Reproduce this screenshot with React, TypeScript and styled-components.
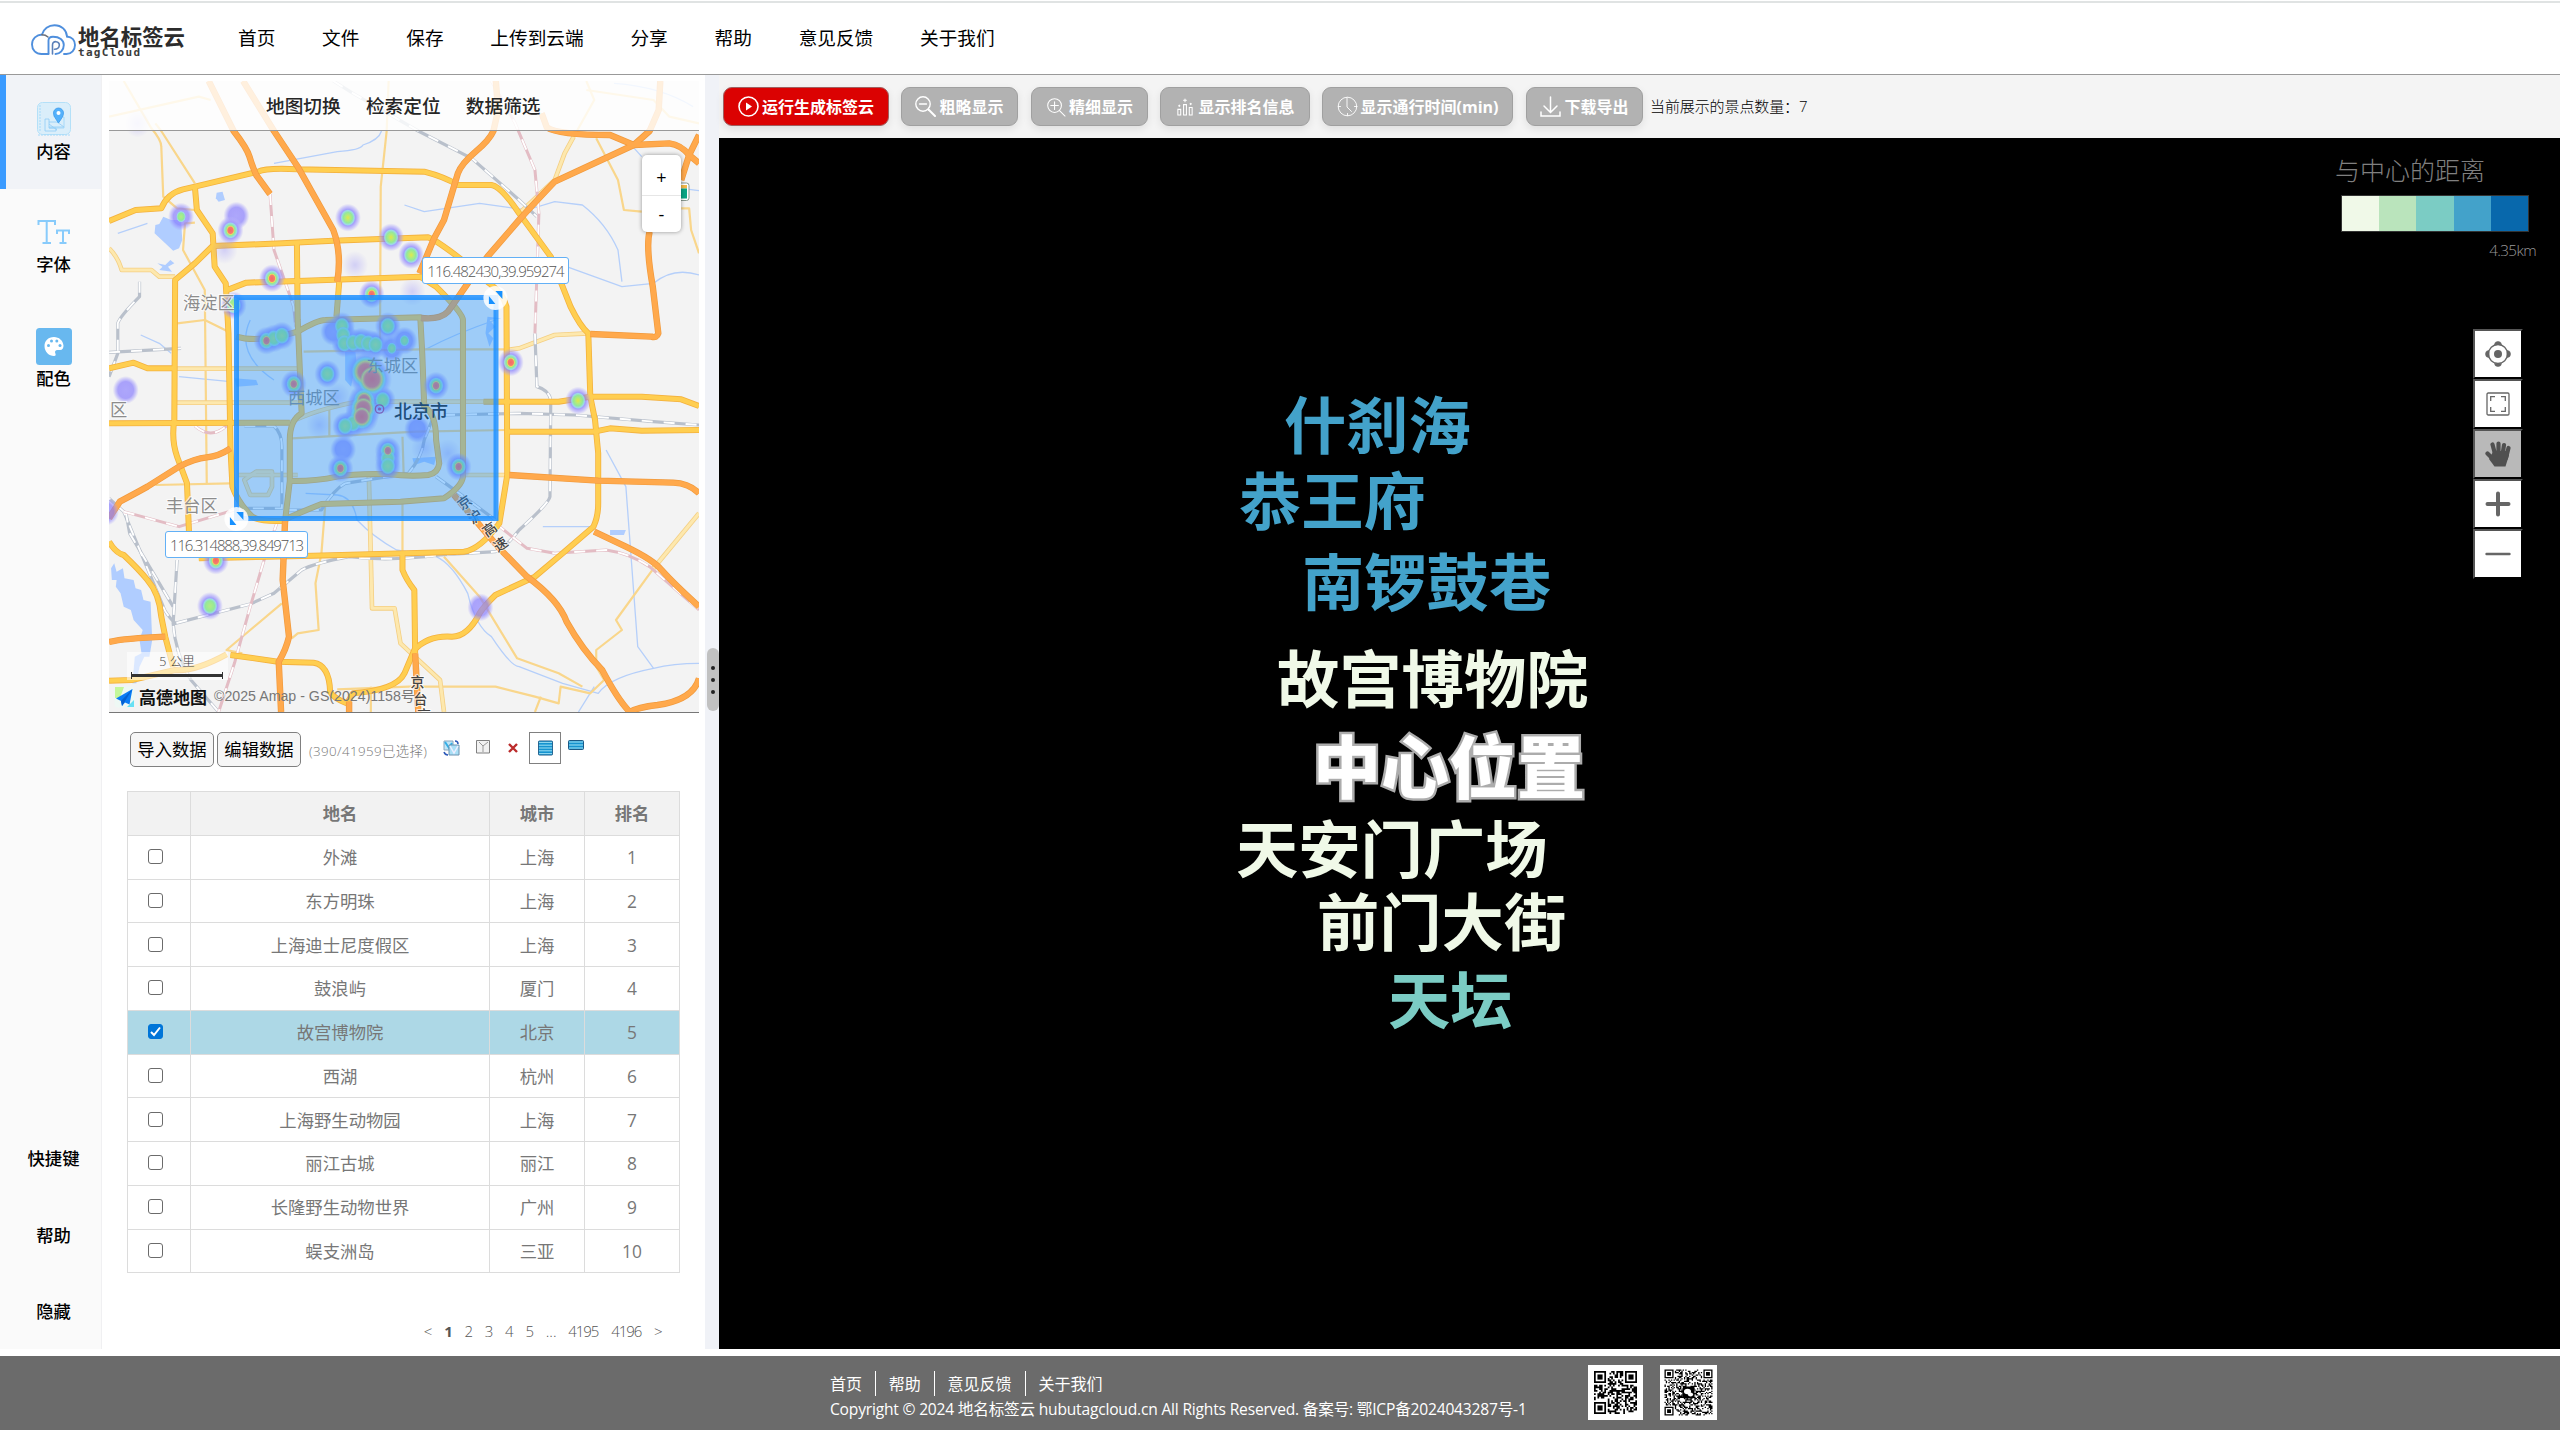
import React from "react";
import styled, { createGlobalStyle, css } from "styled-components";

const FONT = '"Open Sans", "Noto Sans CJK SC", sans-serif';
const CJK = '"Noto Sans CJK SC", sans-serif';

const GlobalStyle = createGlobalStyle`
  * { box-sizing: border-box; }
  html, body { margin: 0; padding: 0; background: #fff; }
  body { font-family: ${FONT}; font-size: 17.33px; line-height: 1.4; color: #000; overflow: hidden; }
  button { font-family: inherit; padding: 0; margin: 0; }
`;

const Page = styled.div`
  width: 2560px;
  height: 1430px;
  display: flex;
  flex-direction: column;
  background: #fff;
`;

/* ---------- header ---------- */

const Header = styled.header`
  height: 75px;
  flex: none;
  display: flex;
  align-items: center;
  border-bottom: 1px solid #999;
  border-top: 1px solid #fff;
  box-shadow: inset 0 2px 0 #e0e3e3;
  padding-left: 31px;
`;

const Logo = styled.div`
  width: 207px;
  display: flex;
  align-items: center;
  gap: 2px;
  padding-top: 4px;
`;

const LogoText = styled.div`
  display: flex;
  flex-direction: column;
  padding-top: 2px;
`;

const LogoTitle = styled.span`
  font: 700 21.4px/24px ${CJK};
  color: #2c2c2c;
  white-space: nowrap;
`;

const LogoSub = styled.span`
  font: 700 11px/10px "DejaVu Sans Mono", monospace;
  letter-spacing: 1.3px;
  color: #3c3c3c;
`;

const Nav = styled.nav`
  display: flex;
  gap: 46.8px;
  padding-bottom: 2px;
  font: 400 18.67px/26px ${CJK};
`;

/* ---------- main ---------- */

const Main = styled.main`
  height: 1274px;
  flex: none;
  display: flex;
`;

const Sidebar = styled.aside`
  width: 102px;
  flex: none;
  display: flex;
  flex-direction: column;
  justify-content: space-between;
  background: #fafafa;
  border-right: 1px solid #f0f0f2;
`;

const SideItem = styled.div<{ $active?: boolean }>`
  height: 113.7px;
  display: flex;
  flex-direction: column;
  align-items: center;
  justify-content: flex-end;
  padding: 0 0 26px 6px;
  font: 500 17.33px/24px ${CJK};
  ${(p) =>
    p.$active &&
    css`
      background: #f1f3f7;
      box-shadow: inset 6px 0 0 #3b9bff;
    `}
`;

const SideIcon = styled.div`
  height: 40px;
  display: flex;
  align-items: center;
  justify-content: center;
`;

const SideFooter = styled.div`
  display: flex;
  flex-direction: column;
  align-items: center;
  gap: 52.5px;
  padding: 0 0 26px 6px;
  font: 500 17.33px/24px ${CJK};
`;

const Panel = styled.section`
  width: 603px;
  flex: none;
  display: flex;
  flex-direction: column;
  padding-top: 6px;
`;

const MapPane = styled.div`
  position: relative;
  width: 590px;
  height: 632px;
  flex: none;
  margin-left: 7px;
  overflow: hidden;
  border-bottom: 1px solid #777;
  background: #f3f3f3;
`;

const MapBar = styled.div`
  position: absolute;
  inset: 0 0 auto 0;
  height: 50px;
  display: flex;
  gap: 25.3px;
  padding: 0 0 2px 157px;
  align-items: center;
  background: rgba(255, 255, 255, 0.82);
  border-bottom: 1px solid #999;
  font: 500 18.67px/26px ${CJK};
  color: #262626;
`;

const CoordTag = styled.div<{ $x: number; $y: number; $w: number; $tight: number }>`
  position: absolute;
  left: ${(p) => p.$x}px;
  top: ${(p) => p.$y}px;
  width: ${(p) => p.$w}px;
  height: 27px;
  border: 1px solid #62b0f6;
  border-radius: 3px;
  background: #fff;
  color: #555;
  font: 300 15px/26px ${FONT};
  letter-spacing: ${(p) => p.$tight}px;
  text-align: center;
  white-space: nowrap;
`;

const ZoomControl = styled.div`
  position: absolute;
  left: 533px;
  top: 74px;
  width: 39px;
  height: 77px;
  display: flex;
  flex-direction: column;
  background: #fff;
  border-radius: 5px;
  box-shadow: 0 0 4px rgba(0, 0, 0, 0.4);
`;

const ZoomStep = styled.div`
  flex: 1;
  display: flex;
  align-items: center;
  justify-content: center;
  padding-top: 4px;
  font: 400 18px/20px ${FONT};
  & + & { border-top: 1px solid #e6e6e6; padding-top: 0; }
`;

const ScaleBox = styled.div`
  position: absolute;
  left: 18px;
  top: 571px;
  width: 101px;
  height: 28px;
  padding: 0 5px 0 4px;
  background: rgba(255, 255, 255, 0.55);
  font: 300 12.5px/20px ${FONT};
  color: #444;
  text-align: center;
`;

const ScaleLine = styled.div`
  height: 7px;
  border: solid #333;
  border-width: 0 1px;
  display: flex;
  align-items: center;
  &::after { content: ""; width: 100%; height: 3px; background: #333; }
`;

const MapCredit = styled.div`
  position: absolute;
  left: 5px;
  top: 604px;
  height: 24px;
  display: flex;
  align-items: center;
  white-space: nowrap;
`;

const AmapName = styled.span`
  font: 700 17px/20px ${CJK};
  color: #111;
  margin: 0 7px 0 4px;
`;

const AmapCopy = styled.span`
  font: 400 14.2px/20px "Liberation Sans", ${CJK};
  color: #777;
  padding-bottom: 2px;
`;

/* ---------- data tools ---------- */

const DataTools = styled.div`
  display: flex;
  align-items: flex-start;
  height: 59px;
  margin-top: 19px;
  padding-left: 28px;
`;

const DataButton = styled.button`
  width: 84px;
  height: 35px;
  margin-right: 3px;
  padding-bottom: 2px;
  border: 1px solid #808080;
  border-radius: 5px;
  background: #f6f6f6;
  font: 400 17.33px/24px ${CJK};
  color: #000;
`;

const Selected = styled.span`
  margin: 10px 9px 0 5px;
  width: 125px;
  font: 300 13.33px/18px ${FONT};
  color: #777;
  letter-spacing: 0.4px;
  white-space: nowrap;
`;

const ToolSlot = styled.span<{ $w: number; $boxed?: boolean; $gap?: number; $drop?: number }>`
  width: ${(p) => p.$w}px;
  height: ${(p) => (p.$boxed ? 32 : 24)}px;
  margin-right: ${(p) => p.$gap ?? 0}px;
  padding-top: ${(p) => (p.$boxed ? 7 : p.$drop ?? 8)}px;
  display: flex;
  justify-content: center;
  align-items: flex-start;
  border: ${(p) => (p.$boxed ? "1px solid #808080" : "0")};
`;

/* ---------- table ---------- */

const Table = styled.div`
  width: 553px;
  margin-left: 25px;
  border: solid #dcdcdc;
  border-width: 1px 0 0 1px;
  color: #777;
  font: 400 17.33px/24px ${FONT};
`;

const Row = styled.div<{ $head?: boolean; $on?: boolean }>`
  display: grid;
  grid-template-columns: 63px 299px 95px 95px;
  height: 43.75px;
  background: ${(p) => (p.$head ? "#f2f2f2" : p.$on ? "#add8e6" : "#fff")};
  font-weight: ${(p) => (p.$head ? 700 : 400)};
`;

const Cell = styled.div`
  display: flex;
  align-items: center;
  justify-content: center;
  border: solid #dcdcdc;
  border-width: 0 1px 1px 0;
`;

const CheckCell = styled(Cell)`
  padding: 0 8px 1px 0;
`;

const Box = styled.span<{ $on?: boolean }>`
  width: 15px;
  height: 15px;
  border-radius: 3px;
  border: 1px solid ${(p) => (p.$on ? "#0075d8" : "#6b6b6b")};
  background: ${(p) => (p.$on ? "#0075d8" : "#fff")};
  display: flex;
`;

const Pager = styled.div`
  display: flex;
  justify-content: flex-end;
  gap: 12.8px;
  margin-top: 48px;
  padding-right: 43.5px;
  font: 300 15px/20px ${FONT};
  letter-spacing: -1.05px;
  color: #555;
  b { font-weight: 700; }
`;

const Dots = styled.span`
  letter-spacing: 0;
  margin-right: -1px;
`;

/* ---------- splitter ---------- */

const Splitter = styled.div`
  width: 14px;
  flex: none;
  background: #f0f2f7;
  display: flex;
  flex-direction: column;
  align-items: flex-end;
  padding-top: 573px;
`;

const Grip = styled.div`
  width: 12px;
  height: 63px;
  border-radius: 6px;
  background: #c1c1c1;
  display: flex;
  flex-direction: column;
  align-items: center;
  justify-content: center;
  gap: 8px;
  i { width: 4px; height: 4px; border-radius: 2px; background: #222; }
`;

/* ---------- cloud view ---------- */

const View = styled.section`
  flex: 1;
  display: flex;
  flex-direction: column;
`;

const Toolbar = styled.div`
  height: 63px;
  flex: none;
  display: flex;
  align-items: flex-start;
  padding: 12px 0 0 4px;
  background: #f4f4f4;
`;

const ActionButton = styled.button<{ $w: number; $gap: number; $primary?: boolean }>`
  width: ${(p) => p.$w}px;
  height: 39px;
  margin-right: ${(p) => p.$gap}px;
  display: flex;
  align-items: center;
  justify-content: center;
  gap: 3px;
  border: 1px solid ${(p) => (p.$primary ? "#a06060" : "#a0a0a0")};
  border-radius: 9px;
  background: ${(p) => (p.$primary ? "#db0202" : "#b2b2b2")};
  box-shadow: 0 3px 8px rgba(0, 0, 0, 0.09);
  color: #fff;
  font: 700 16px/24px "Open Sans", ${CJK};
  white-space: nowrap;
`;

const Count = styled.span`
  font: 300 15px/20px ${FONT};
  letter-spacing: -0.1px;
  color: #000;
  padding-top: 9px;
`;

const Canvas = styled.div`
  position: relative;
  flex: 1;
  background: #000;
  overflow: hidden;
`;

const Word = styled.span<{ $x: number; $y: number; $c: string; $center?: boolean }>`
  position: absolute;
  left: ${(p) => p.$x - 719}px;
  top: ${(p) => p.$y - 138}px;
  color: ${(p) => p.$c};
  font: 700 62.3px/62px ${CJK};
  white-space: nowrap;
  ${(p) =>
    p.$center &&
    css`
      font: 900 68px/68px ${CJK};
      -webkit-text-stroke: 5px #acacac;
      paint-order: stroke fill;
    `}
`;

const Legend = styled.div`
  position: absolute;
  right: 24px;
  top: 13px;
  width: 202px;
  display: flex;
  flex-direction: column;
`;

const LegendTitle = styled.span`
  font: 300 25px/36px ${CJK};
  color: #808080;
  padding-left: 1px;
`;

const Ramp = styled.div`
  width: 188px;
  height: 37px;
  margin: 8px 0 0 7px;
  display: flex;
  border: 1px solid #333;
`;

const Swatch = styled.span<{ $c: string }>`
  flex: 1;
  background: ${(p) => p.$c};
`;

const RampLabel = styled.span`
  align-self: flex-end;
  margin-top: 8px;
  font: 300 15.2px/20px ${FONT};
  letter-spacing: -0.6px;
  color: #999;
`;

const ViewTools = styled.div`
  position: absolute;
  right: 37px;
  top: 191px;
  display: flex;
  flex-direction: column;
`;

const ViewTool = styled.div<{ $on?: boolean }>`
  width: 50px;
  height: 50px;
  display: flex;
  align-items: center;
  justify-content: center;
  border: 2px solid;
  border-color: #555 #000 #000 #555;
  background: ${(p) => (p.$on ? "#b9b9b9" : "#fff")};
`;

/* ---------- footer ---------- */

const Footer = styled.footer`
  height: 74px;
  margin-top: 7px;
  padding-left: 830px;
  display: flex;
  background: #6b6b6b;
  color: #fff;
`;

const FooterText = styled.div`
  width: 758px;
  padding-top: 15px;
`;

const FooterLinks = styled.div`
  display: flex;
  font: 400 16px/25px ${CJK};
  span + span { margin-left: 12.9px; padding-left: 12.9px; border-left: 1px solid #fff; }
`;

const Copyright = styled.div`
  margin-top: 1px;
  font: 400 15.6px/24px ${FONT};
  letter-spacing: -0.2px;
  white-space: nowrap;
`;

const Codes = styled.div`
  display: flex;
  gap: 17px;
  padding-top: 9px;
`;

/* ---------- map drawing ---------- */

const HIGHWAYS = [
  "M275-117L338 33Q372 85 378 110T395 165L430 222",
  "M362-117L440 33L500 140L590 330Q612 400 600 485",
  "M1001-117L1007-30L995 33Q985 60 950 95T905 160L890 220L870 300L845 355L808 460",
  "M1350 75Q1250 130 1150 185Q1090 260 1060 300L980 410L930 490Q895 550 880 575Q860 600 812 594",
  "M1117-20L1130 22Q1160 45 1290 45L1350 75L1440 70Q1470 75 1490 105L1515 130",
  "M1417-117L1413-30L1390 33L1350 75",
  "M1515 45L1490 105L1470 180",
  "M1390 335Q1380 380 1398 500L1412 640Q1408 655 1395 650L1240 642",
  "M23 1195L50 1145Q90 1120 120 1100L200 1040Q240 1015 270 1012T330 985",
  "M23 1566Q60 1555 165 1550",
  "M468 1203L462 1380L478 1550Q470 1590 452 1625L458 1776",
  "M895 1125L1010 1285L1080 1370Q1160 1440 1180 1505Q1220 1590 1270 1650Q1310 1740 1340 1776",
  "M1035 1065L1260 1082L1450 1088Q1490 1090 1515 1120",
  "M1250 1235L1330 1280Q1400 1320 1420 1350Q1450 1390 1515 1460",
  "M1340 1776Q1360 1762 1410 1755Q1500 1740 1515 1675",
  "M797 1600L805 1776",
  "M630 1776V1745",
];

const MAIN_ROADS = [
  "M23 303L90 270L155 265Q170 220 210 208L240 200L400 155Q420 143 500 148L820 155Q870 170 905 195H990Q1015 200 1060 280L1140 410L1190 560Q1215 620 1235 640L1240 830L1252 900L1260 1000V1150Q1260 1190 1248 1220L1170 1300L1100 1370L1000 1425Q970 1460 960 1480Q930 1550 890 1550Q830 1545 795 1590L770 1660Q750 1710 640 1720Q630 1740 625 1750Q590 1735 582 1715Q580 1635 540 1628L450 1625L330 1605",
  "M240 200L245 270L285 340L290 440L318 490L325 640L330 985L335 1100Q350 1150 385 1190Q400 1205 460 1203Q500 1180 560 1152L760 1145L870 1135Q915 1100 918 1070L918 600Q918 580 850 500L810 470L500 483L370 488L318 512",
  "M285 378L460 370L590 362L830 352Q850 360 910 415L985 490Q1020 520 1028 560L1030 1065L1010 1210Q960 1290 920 1295L540 1307L250 1315",
  "M285 378L240 430L190 480L188 900Q180 960 195 1010L220 1090L225 1235",
  "M498 370L500 600L510 880Q480 900 480 960V1083L468 1203",
  "M605 485L598 590",
  "M345 650Q400 670 500 635Q550 600 570 600L810 592L815 700L820 860Q850 880 850 960L858 1030Q855 1060 830 1065Q780 1070 730 1062Q640 1060 600 1070Q540 1085 480 1083",
  "M23 745L85 728L120 745H190",
  "M23 910L480 908",
  "M970 845H1160L1240 830L1370 830L1470 838L1515 858",
  "M1030 935H1250L1290 925L1370 932L1515 930",
  "M23 1265Q40 1300 60 1305Q100 1350 120 1380Q150 1420 155 1490L165 1550L185 1640",
  "M23 1682L80 1680L190 1650Q240 1655 320 1603",
  "M765 1300L765 1350Q775 1380 795 1410L797 1600",
];

const PALE_ROADS = [
  "M23 385Q45 410 55 450H130L150 470H190",
  "M1235 640L1150 645L1060 685L1030 690",
  "M190 746H500", "M190 848H500", "M650 845H970",
  "M680 1070L688 1465H745L760 1570L860 1680L870 1776",
  "M1515 1180L1400 1345", "M1198 50L1175 100L1150 180L1060 280",
  "M500 1065H350", "M920 1065H1035",
  "M480 908Q540 870 650 845",
  "M365 1080L395 1055H435V1100L425 1125H380Z",
];

const THIN_ROADS = [
  "M730-117L725 33L710 200L708 690", "M60-117L130 25Q155 60 155 80L160 230Q190 260 195 265L240 270",
  "M140 10L155 33L240 190", "M240 308L215 310L210 390L265 510L270 1090", "M195 610L265 600L325 635",
  "M140 1095L330 1090", "M570 1150L560 1300L545 1390L553 1530L500 1540L485 1555", "M460 1450L320 1590L360 1600",
  "M870 1310L960 1430L1055 1615L1160 1660L1220 1700", "M600 1708L780 1700L1000 1700L1100 1730L1160 1750L1165 1700L1240 1720L1275 1680L1255 1640V1590L1320 1530L1305 1500L1400 1345",
  "M1255 55L1310 180L1325 270L1370 275", "M1470 265H1490L1495 330L1515 400", "M765 1150V1300",
  "M685 1700V1776", "M1115 1730L1100 1776", "M515 695L810 688H1030", "M485 955L800 935L1030 930",
  "M580 860V950", "M765 950L768 1065", "M23-10L250-70L280-60", "M1230-117L1250-60L1198 50",
  "M1230-90L1400-60L1440-10L1515 10",
];

const GREY_RAILS = [
  "M590-117L640-80L805 33L940 115L1060 240L1105 290",
  "M1100 640L1105 800Q1135 810 1140 840L1138 1130Q1135 1150 1060 1230Q1020 1290 1000 1295L860 1305Q730 1325 630 1310Q540 1330 510 1350L440 1420L380 1452L190 1510Q165 1480 160 1460L60 1175L23 1135",
  "M100 485V530Q50 590 45 610V700L23 770", "M23 697L205 685", "M870 885L1060 880L1200 885L1400 905L1515 915",
  "M850 1070L920 1130L1000 1200", "M470 1170H560Q590 1110 620 1090L780 1060Q815 1010 820 960L840 900",
  "M195 1320L185 1510Q190 1600 230 1680L300 1776", "M65 1175L75 1240L185 1460", "M365 918H440Q460 940 460 980V1165H370",
];

const PINK_RAILS = [
  "M990-117L1050 10L1100 150L1110 280L1100 640", "M430 222L440 390L490 560L495 620",
  "M60 1175L200 1220L345 1168", "M450 1200L415 1320L380 1460L340 1630L300 1776",
  "M1000 1210L1080 1285L1150 1300L1280 1290Q1340 1300 1390 1340L1515 1470", "M240 918Q280 960 320 918",
];

const STREAMS = [
  "M440 130L600 95Q660 90 665 75Q705 60 712 33", "M770 255L820 275L960 250L1080 270L1150 245L1220 255Q1280 310 1310 390L1320 485",
  "M1180 440Q1250 470 1320 500L1400 490Q1450 440 1515 465", "M1280 990L1330 1100L1360 1580L1400 1645Q1450 1630 1515 1630",
  "M520 1120L600 1125Q640 1130 650 1200Q690 1250 750 1290L850 1310Q890 1330 930 1420Q950 1520 990 1550Q1040 1640 1060 1640L1170 1690L1260 1720Q1290 1670 1400 1645",
  "M103 645L150 670L180 700", "M820 690Q900 640 1000 600", "M380 600Q340 700 440 780", "M200 770L330 785",
  "M1120 1220L1250 1220", "M1300-110Q1420-100 1500-40", "M1340 70L1370 110", "M1470 205L1515 212", "M120 310L45 340",
  "M1210 1776L1250 1700",
];

type Heat = { x: number; y: number; core?: "green" | "lime" | "hot" | "pale"; r?: number; faint?: boolean };

const HEAT: Heat[] = [
  { x: 205, y: 290, core: "pale" }, { x: 345, y: 287 }, { x: 330, y: 331, core: "hot" }, { x: 315, y: 390, faint: true },
  { x: 627, y: 293, core: "lime" }, { x: 736, y: 352, core: "lime" }, { x: 787, y: 405, core: "lime" },
  { x: 645, y: 435, faint: true }, { x: 435, y: 475, core: "hot" }, { x: 687, y: 523, core: "hot" },
  { x: 790, y: 515, faint: true }, { x: 338, y: 556, core: "green" }, { x: 1039, y: 727, core: "hot" },
  { x: 1209, y: 842, core: "lime" }, { x: 65, y: 810 }, { x: 421, y: 662, core: "hot" }, { x: 440, y: 655, core: "green" }, { x: 460, y: 647, core: "green" },
  { x: 612, y: 618, core: "green" }, { x: 615, y: 645, core: "green" }, { x: 728, y: 618, core: "green" }, { x: 618, y: 670, core: "green" },
  { x: 640, y: 668, core: "green" }, { x: 660, y: 665, core: "green" }, { x: 678, y: 670, core: "green" }, { x: 697, y: 674, core: "green" },
  { x: 738, y: 685, core: "pale" }, { x: 770, y: 662, core: "pale" }, { x: 590, y: 635 }, { x: 575, y: 762, core: "green" },
  { x: 490, y: 792, core: "hot" }, { x: 850, y: 797, core: "hot" }, { x: 672, y: 755, core: "hot", r: 16 },
  { x: 688, y: 778, core: "hot", r: 16 }, { x: 668, y: 842, core: "hot", r: 12 }, { x: 666, y: 865, core: "hot", r: 14 },
  { x: 662, y: 890, core: "hot", r: 13 }, { x: 640, y: 910, core: "green" }, { x: 620, y: 918, core: "green" },
  { x: 715, y: 840, core: "green" }, { x: 802, y: 927 }, { x: 555, y: 915, faint: true }, { x: 600, y: 830, faint: true },
  { x: 615, y: 988 }, { x: 608, y: 1045, core: "hot" }, { x: 728, y: 992, core: "hot" }, { x: 728, y: 1015, core: "green" },
  { x: 728, y: 1038, core: "green" }, { x: 907, y: 1040, core: "hot" }, { x: 293, y: 1322, core: "hot" },
  { x: 278, y: 1458, core: "green" }, { x: 962, y: 1462 }, { x: 95, y: 10, faint: true }, { x: 880, y: 1000, faint: true },
  { x: 15, y: 1175 }, { x: 820, y: 985, faint: true },
];

const mx = (x: number) => 100 + x * 0.3954;
const my = (y: number) => 120 + y / 3;

const Lines = ({ d, color, w, dash }: { d: string[]; color: string; w: number; dash?: string }) => (
  <g fill="none" stroke={color} strokeWidth={w} strokeDasharray={dash} strokeLinejoin="round">
    {d.map((p, i) => <path key={i} d={p} vectorEffect="non-scaling-stroke" />)}
  </g>
);

const CityMap = () => (
  <svg width="590" height="631" viewBox="109 81 590 631" style={{ display: "block" }}>
    <defs>
      <radialGradient id="halo">
        <stop offset="0" stopColor="#938aff" />
        <stop offset=".6" stopColor="#877cff" stopOpacity=".95" />
        <stop offset=".8" stopColor="#9c94ff" stopOpacity=".6" />
        <stop offset="1" stopColor="#aaa4ff" stopOpacity="0" />
      </radialGradient>
      <radialGradient id="haze">
        <stop offset="0" stopColor="#8077ff" stopOpacity=".4" />
        <stop offset="1" stopColor="#8077ff" stopOpacity="0" />
      </radialGradient>
      <radialGradient id="ring">
        <stop offset="0" stopColor="#b4f27c" />
        <stop offset=".6" stopColor="#93f090" />
        <stop offset=".84" stopColor="#9be8e4" stopOpacity=".85" />
        <stop offset="1" stopColor="#8fb6ff" stopOpacity="0" />
      </radialGradient>
      <radialGradient id="hot">
        <stop offset="0" stopColor="#ff6259" />
        <stop offset=".6" stopColor="#fb7a62" />
        <stop offset=".82" stopColor="#efe457" />
        <stop offset="1" stopColor="#a4ee70" stopOpacity="0" />
      </radialGradient>
      <radialGradient id="lime">
        <stop offset="0" stopColor="#e6ee3c" />
        <stop offset="1" stopColor="#bdf26a" stopOpacity="0" />
      </radialGradient>
    </defs>
    <rect x="109" y="81" width="590" height="631" fill="#f3f3f3" />
    <g transform="translate(100 120) scale(.3954 .33333)">
      <g fill="#b0cdff">
        <path d="M160 290L180 300H205L208 360L200 385L185 392L165 370L138 340L140 315L150 312Z" />
        <path d="M295 218L310 215L316 240L300 245L293 235Z" />
        <path d="M145 430L165 435L178 420L188 430L172 440L182 455L150 450L158 440Z" />
        <path d="M28 1345L36 1330L42 1355L58 1345L62 1375L85 1380L90 1405L104 1410L110 1440L128 1445L132 1560L125 1610H112L100 1640L92 1690L82 1690L88 1610L105 1600L100 1560L108 1530L85 1500L78 1470L60 1460L52 1420L40 1400L42 1380L30 1380Z" />
        <path d="M340 775L395 780L400 795L345 800Z" />
        <path d="M620 690L645 680L648 720L635 800L620 780Z" />
        <path d="M980 590L1015 595L985 600L1000 620L982 640L995 655L985 680L975 640Z" />
        <path d="M790 1015L850 1010L845 1035L820 1025L795 1035Z" />
        <path d="M1290 1230H1330L1325 1245H1290Z" />
      </g>
      <Lines d={STREAMS} color="#b5cffa" w={1.3} />
      <Lines d={THIN_ROADS} color="#f9d68b" w={2.2} />
      <Lines d={PALE_ROADS} color="#f4cf83" w={4.6} />
      <Lines d={PALE_ROADS} color="#fde8ae" w={3} />
      <Lines d={GREY_RAILS} color="#b9c0cb" w={3.2} />
      <Lines d={GREY_RAILS} color="#fff" w={1.9} dash="11 11" />
      <Lines d={PINK_RAILS} color="#e3bcc4" w={3} />
      <Lines d={PINK_RAILS} color="#fff" w={1.9} dash="11 11" />
      <Lines d={MAIN_ROADS} color="#f4b23e" w={6} />
      <Lines d={MAIN_ROADS} color="#ffce50" w={4.4} />
      <Lines d={HIGHWAYS} color="#f19a3d" w={6.4} />
      <Lines d={HIGHWAYS} color="#ffa94c" w={5} />
    </g>
    <g opacity=".72">
      {HEAT.map((h, i) => (
        <ellipse key={i} cx={mx(h.x)} cy={my(h.y)} rx={h.r ? h.r + 4 : 13} ry={h.r ? h.r + 5 : 14} fill={h.faint ? "url(#haze)" : "url(#halo)"} />
      ))}
    </g>
    <g opacity=".92">
      {HEAT.filter((h) => h.core).map((h, i) => {
        const r = h.r ? h.r - 1 : h.core === "pale" ? 5 : 7.6;
        return <ellipse key={i} cx={mx(h.x)} cy={my(h.y)} rx={r} ry={r + 1} fill="url(#ring)" />;
      })}
      {HEAT.filter((h) => h.core === "hot" || h.core === "lime").map((h, i) => {
        const r = h.r ? h.r - 4 : 4.4;
        return <ellipse key={i} cx={mx(h.x)} cy={my(h.y)} rx={r} ry={r + 0.8} fill={`url(#${h.core})`} />;
      })}
    </g>
    <g fontFamily='"Noto Sans CJK SC", sans-serif' fontSize="17.3" fill="#8c8c8c" stroke="#fff" strokeWidth="2" paintOrder="stroke" strokeOpacity=".7">
      <text x="183" y="308.5">海淀区</text>
      <text x="166" y="512">丰台区</text>
      <text x="110" y="416">区</text>
      <text x="288" y="403.5" strokeOpacity="0">西城区</text>
      <text x="366.5" y="371.5" strokeOpacity="0">东城区</text>
      <text x="394" y="418" fontSize="18" fontWeight="500" fill="#222" strokeOpacity="0">北京市</text>
      <g fontSize="14" fontWeight="500" fill="#444" textAnchor="middle">
        <text transform="translate(464.6 502.7) rotate(-35)" y="5">京</text>
        <text transform="translate(475 516.7) rotate(-35)" y="5">沪</text>
        <text transform="translate(489.5 529.5) rotate(-35)" y="5">高</text>
        <text transform="translate(500.5 544.5) rotate(-35)" y="5">速</text>
        <text x="417.5" y="687">京</text>
        <text x="420.5" y="703.5">台</text>
        <text x="424" y="720">高</text>
      </g>
    </g>
    <circle cx="379.5" cy="409" r="4.2" fill="none" stroke="#b4438a" strokeWidth="1.3" />
    <circle cx="379.5" cy="409" r="1.6" fill="#b4438a" />
    <rect x="672" y="183" width="17" height="17.500" rx="2.500" fill="#fff" stroke="#8a9a90" />
    <rect x="674" y="185" width="13" height="3.500" fill="#f2b84a" />
    <rect x="674" y="188.500" width="13" height="10" fill="#0aa584" />
    <rect x="236.500" y="297.500" width="259.500" height="221" fill="#1e90ff" fillOpacity=".4" stroke="#1e90ff" strokeOpacity=".85" strokeWidth="5" />
    {[[495.4, 298], [236.4, 519]].map(([x, y]) => (
      <g key={x} transform={`translate(${x} ${y})`}>
        <circle r="12" fill="#fff" fillOpacity=".85" />
        <path d="M0-7H7V1ZM0 6H-6.500V-2Z" fill="#1791ff" />
      </g>
    ))}
  </svg>
);

/* ---------- icons ---------- */

const CloudLogo = () => (
  <svg width="45" height="32" viewBox="0 0 45 32" fill="none" stroke="#4f8fdd" strokeWidth="1.900" strokeLinecap="round">
    <path d="M13.500 30H10.500C5 30 1 26 1 20.500C1 14.500 5.500 10.800 11 10.500C12.500 5 17.500 1.200 23.500 1.200C30.500 1.200 35.500 6 36 12.500" />
    <path d="M10.800 10.800C13.500 10.800 15.500 11.600 17 13" stroke="#6b6f78" strokeWidth="1.500" />
    <path d="M17.500 29.500V16.500C17.500 14 19.500 12.700 22 12.700C28.500 12.700 32.800 16 32.800 21C32.800 26 29 30 24.500 30" />
    <path d="M21.500 30V21C21.500 18.500 23 17.500 25 17.700C27.500 18 28.500 19.500 28.300 21.500C28 24 26 25.200 23.500 25.200" stroke="#5a7fb8" strokeWidth="1.600" />
    <path d="M36 12.500C41 13 44 16.500 44 21C44 26 40.500 30 35.500 30H33M14 30H17.500" />
  </svg>
);

const MapIcon = () => (
  <svg width="34" height="34" viewBox="0 0 34 34" fill="none">
    <rect x=".5" y=".5" width="33" height="32" rx="5" fill="#daeefa" stroke="#b4e0f8" />
    <path d="M3 3V30M1 33H33" stroke="#a6dafa" strokeDasharray="2 1" />
    <path d="M8 17V29H19V26H12V17ZM12 20H20L27 25H12M12 22L20 28" stroke="#8fcbf6" strokeWidth=".8" />
    <path d="M16 14L27 15V26H12" stroke="#9bd3f8" strokeWidth=".8" />
    <path d="M21.500 21C18.500 16.500 16.500 14 16.500 11A5 5 0 0 1 26.500 11C26.500 14 24.500 16.500 21.500 21Z" fill="#54b1fb" stroke="#3d9ceb" strokeWidth=".8" />
    <circle cx="21.500" cy="11" r="2" fill="#fff" />
  </svg>
);

const TypeIcon = () => (
  <svg width="34" height="26" viewBox="0 0 34 26" fill="none" stroke="#88cbfb" strokeWidth="2">
    <path d="M1.500 6V2H18V6M9.700 2V24M5.500 24H14M20 15V11.500H32V15M26 11.500V24M22.500 24H29.500" />
  </svg>
);

const PaletteIcon = () => (
  <svg width="36" height="37" viewBox="0 0 36 37">
    <rect width="36" height="37" rx="3.500" fill="#68b8ef" />
    <path d="M18 9C12 9 8.500 13 8.500 18C8.500 24 13 28 18 28C19.800 28 20 26.500 19.300 25.200C18.500 23.500 19.500 22 21.500 22H24C26.500 22 27.500 20 27.500 17.500C27 12.500 23 9 18 9Z" fill="#fff" />
    <g fill="#68b8ef"><circle cx="12.500" cy="17.500" r="1.500" /><circle cx="15.500" cy="13" r="1.500" /><circle cx="20.800" cy="13" r="1.500" /><circle cx="24" cy="17.500" r="1.500" /></g>
  </svg>
);

const Stroke = ({ w = 1.4, size = 21, children }: { w?: number; size?: number; children: React.ReactNode }) => (
  <svg width={size} height={size} viewBox="0 0 21 21" fill="none" stroke="#fff" strokeWidth={w} strokeLinecap="round">{children}</svg>
);

const PlayIcon = () => <Stroke w={1.6}><circle cx="10.500" cy="10.500" r="9.500" /><path d="M8 6.500V14.500L14 10.500Z" fill="#fff" stroke="none" /></Stroke>;
const MinusLens = () => <Stroke><circle cx="8" cy="8" r="7.200" /><path d="M4.500 8H11.500" /><path d="M13.500 13.500L20 20" strokeWidth="2" /></Stroke>;
const PlusLens = () => <Stroke w={1.1} size={20}><circle cx="9" cy="9" r="7.200" /><path d="M5 9H13M9 5V13M14.200 14.200L20 20" /></Stroke>;
const RankIcon = () => <Stroke w={1.1} size={20}><path d="M3 19V13H6V19ZM9 19V8H12V19ZM15 19V11H18V19Z" /><path d="M10.500 2V5M9 3.500H12M4.500 8.500V10M16.500 6.500V8M3.800 9.200H5.200M15.800 7.200H17.200" /></Stroke>;
const ClockIcon = () => <Stroke w={0.9}><circle cx="10.500" cy="10.500" r="9.300" /><path d="M10 1.500V11L14.500 15.500M1.500 10.500H3.500M17.500 10.500H19.500M10.500 17.500V19.500" /></Stroke>;
const SaveIcon = () => <Stroke w={1.5}><path d="M10.500 1V16M4 10L10.500 16.500L17 10M1 16V20H20V16" /></Stroke>;

const dark = "#666";
const LocateIcon = () => (
  <svg width="26" height="26" viewBox="0 0 26 26"><circle cx="13" cy="13" r="9.500" fill="none" stroke={dark} strokeWidth="1.300" /><circle cx="13" cy="13" r="4" fill={dark} />
    <path d="M9.500 4A3.500 3.500 0 0 1 16.500 4Q13 3 9.500 4ZM9.500 22A3.500 3.500 0 0 0 16.500 22Q13 23 9.500 22ZM4 9.500A3.500 3.500 0 0 0 4 16.500ZM22 9.500A3.500 3.500 0 0 1 22 16.500Z" fill={dark} stroke={dark} strokeWidth=".6" /></svg>
);
const FitIcon = () => (
  <svg width="26" height="26" viewBox="0 0 26 26" fill="none" stroke={dark} strokeWidth="1.300"><rect x="2" y="2" width="22" height="22" rx="1.200" /><path d="M5.700 10V5.700H10M16 5.700H20.300V10M20.300 16V20.300H16M10 20.300H5.700V16" /></svg>
);
const HandIcon = () => (
  <svg width="26" height="26" viewBox="0 0 26 26" fill="none" stroke="#505050" strokeLinecap="round">
    <path d="M7.500 3.500L10 13M13.500 2.500V13M19 4L17.500 14M23.500 7L21 17" strokeWidth="4.200" /><path d="M2.500 12.500L10 20" strokeWidth="4.200" />
    <path d="M8.500 10H21.500L24 14L20.500 25.500H9.500L4 18Z" fill="#505050" stroke="none" />
  </svg>
);
const PlusIcon = () => <svg width="26" height="26" viewBox="0 0 26 26" stroke={dark} strokeWidth="4" strokeLinecap="round"><path d="M2.500 13H23.500M13 2.500V23.500" /></svg>;
const LessIcon = () => <svg width="26" height="26" viewBox="0 0 26 26" stroke={dark} strokeWidth="2.400" strokeLinecap="round"><path d="M1.500 13H24.500" /></svg>;

const SelectMaps = () => (
  <svg width="18" height="17" viewBox="0 0 18 17"><path d="M1 1H10V10H1Z" fill="#bfe6f8" stroke="#8aa6bd" /><path d="M2 2L6 8L9 3" stroke="#33aee6" fill="none" strokeWidth="2" /><path d="M6 5H16V15H6Z" fill="#a9dff6" stroke="#6d92b0" /><path d="M7 6L11 13L15 6" stroke="#eef" fill="none" strokeWidth="1.500" /><path d="M12 1Q15 1 15 4M1 12Q2 15 5 15" stroke="#2c58b8" fill="none" strokeWidth="1.500" /></svg>
);
const ClearMap = () => <svg width="14" height="14" viewBox="0 0 14 14" fill="none" stroke="#808080"><path d="M.5.5H13.500V13H.5Z" fill="#f2f2f2" /><path d="M3 2L7 6L12 2M7 6V12" stroke="#999" /></svg>;
const CrossIcon = () => <svg width="10" height="10" viewBox="0 0 10 10" stroke="#bb2b2b" strokeWidth="2.400"><path d="M1 1L9 9M9 1L1 9" /></svg>;
const Stripes = ({ rows }: { rows: number }) => (
  <svg width={rows > 3 ? 15 : 16} height={rows * 3 + 1} viewBox={`0 0 16 ${rows * 3 + 1}`}>
    <rect x=".5" y=".5" width="15" height={rows * 3} rx="1" fill="#1593cf" stroke="#1c5a86" />
    {Array.from({ length: rows }, (_, i) => <path key={i} d={`M1 ${i * 3 + 2}H15`} stroke="#a8e6f8" />)}
  </svg>
);

const AmapIcon = () => (
  <svg width="21" height="22" viewBox="0 0 21 22"><rect width="20" height="21" x=".5" y=".5" rx="4" fill="#eef8f4" /><path d="M1 1H10L6 12H1Z" fill="#c4f79b" /><path d="M13 21H20V14Z" fill="#67e0f4" /><path d="M18.500 3L2 12.500L7 15L8 20L11 16.500L15.500 18.500Z" fill="#0a7cf5" /><path d="M18.500 3L7 15L8 20Z" fill="#0560d0" /></svg>
);

const QrCode = ({ n, w, pad, seed, badge }: { n: number; w: number; pad: number; seed: number; badge?: boolean }) => {
  const u = (w - pad * 2) / n;
  const uy = (55 - pad * 2) / n;
  let s = seed;
  let d = "";
  for (let y = 0; y < n; y++)
    for (let x = 0; x < n; x++) {
      s = (s * 1103515245 + 12345) % 2147483648;
      const corner = (x < 8 && y < 8) || (x > n - 9 && y < 8) || (x < 8 && y > n - 9);
      if (!corner && s / 2147483648 > (badge ? 0.58 : 0.5)) d += `M${x} ${y}h1v1h-1z`;
    }
  return (
    <svg width={w} height="55" viewBox={`0 0 ${w} 55`}>
      <rect width={w} height="55" fill="#fff" />
      <g transform={`translate(${pad} ${pad}) scale(${u} ${uy})`}>
        <path d={d} fill="#000" />
        {[[0, 0], [n - 7, 0], [0, n - 7]].map(([x, y]) => (
          <g key={`${x}-${y}`} transform={`translate(${x} ${y})`}><path d="M0 0H7V7H0ZM1 1V6H6V1Z" fillRule="evenodd" /><path d="M2 2H5V5H2Z" /></g>
        ))}
      </g>
      {badge && <g><rect x={w / 2 - 6} y="21.500" width="12" height="12" rx="2" /><ellipse cx={w / 2 - 1} cy="26.500" rx="3.500" ry="2.800" fill="#fff" /><ellipse cx={w / 2 + 2} cy="29.500" rx="2.600" ry="2" fill="#fff" /></g>}
    </svg>
  );
};

/* ---------- data ---------- */

const ROWS = [
  ["外滩", "上海"], ["东方明珠", "上海"], ["上海迪士尼度假区", "上海"], ["鼓浪屿", "厦门"], ["故宫博物院", "北京"],
  ["西湖", "杭州"], ["上海野生动物园", "上海"], ["丽江古城", "丽江"], ["长隆野生动物世界", "广州"], ["蜈支洲岛", "三亚"],
];

const WORDS = [
  { t: "什刹海", x: 1284, y: 391, c: "#43a2ca" },
  { t: "恭王府", x: 1239, y: 467, c: "#43a2ca" },
  { t: "南锣鼓巷", x: 1302, y: 548, c: "#43a2ca" },
  { t: "故宫博物院", x: 1277, y: 645, c: "#f0f9e8" },
  { t: "中心位置", x: 1313, y: 730, c: "#fff", center: true },
  { t: "天安门广场", x: 1236, y: 815, c: "#f0f9e8" },
  { t: "前门大街", x: 1317, y: 888, c: "#f0f9e8" },
  { t: "天坛", x: 1388, y: 966, c: "#7bccc4" },
];

const RAMP = ["#f0f9e8", "#bae4bc", "#7bccc4", "#43a2ca", "#0868ac"];

export default function App() {
  return (
    <Page>
      <GlobalStyle />
      <Header>
        <Logo>
          <CloudLogo />
          <LogoText>
            <LogoTitle>地名标签云</LogoTitle>
            <LogoSub>tagCloud</LogoSub>
          </LogoText>
        </Logo>
        <Nav>
          {["首页", "文件", "保存", "上传到云端", "分享", "帮助", "意见反馈", "关于我们"].map((t) => <span key={t}>{t}</span>)}
        </Nav>
      </Header>
      <Main>
        <Sidebar>
          <div>
            <SideItem $active><SideIcon><MapIcon /></SideIcon>内容</SideItem>
            <SideItem><SideIcon><TypeIcon /></SideIcon>字体</SideItem>
            <SideItem><SideIcon><PaletteIcon /></SideIcon>配色</SideItem>
          </div>
          <SideFooter><span>快捷键</span><span>帮助</span><span>隐藏</span></SideFooter>
        </Sidebar>
        <Panel>
          <MapPane>
            <CityMap />
            <MapBar><span>地图切换</span><span>检索定位</span><span>数据筛选</span></MapBar>
            <CoordTag $x={313} $y={176} $w={147} $tight={-0.98}>116.482430,39.959274</CoordTag>
            <CoordTag $x={56} $y={450} $w={143} $tight={-1.15}>116.314888,39.849713</CoordTag>
            <ZoomControl><ZoomStep>+</ZoomStep><ZoomStep>-</ZoomStep></ZoomControl>
            <ScaleBox>5 公里<ScaleLine /></ScaleBox>
            <MapCredit><AmapIcon /><AmapName>高德地图</AmapName><AmapCopy>©2025 Amap - GS(2024)1158号</AmapCopy></MapCredit>
          </MapPane>
          <DataTools>
            <DataButton>导入数据</DataButton>
            <DataButton>编辑数据</DataButton>
            <Selected>(390/41959已选择)</Selected>
            <ToolSlot $w={18} $gap={15}><SelectMaps /></ToolSlot>
            <ToolSlot $w={14} $gap={18}><ClearMap /></ToolSlot>
            <ToolSlot $w={10} $gap={11} $drop={11}><CrossIcon /></ToolSlot>
            <ToolSlot $w={32} $gap={7} $boxed><Stripes rows={5} /></ToolSlot>
            <ToolSlot $w={16}><Stripes rows={3} /></ToolSlot>
          </DataTools>
          <Table>
            <Row $head><Cell /><Cell>地名</Cell><Cell>城市</Cell><Cell>排名</Cell></Row>
            {ROWS.map(([name, city], i) => (
              <Row key={name} $on={i === 4}>
                <CheckCell>
                  <Box $on={i === 4}>
                    {i === 4 && <svg width="13" height="13" viewBox="0 0 13 13" fill="none" stroke="#fff" strokeWidth="2"><path d="M2 7L5 10L11 2.500" /></svg>}
                  </Box>
                </CheckCell>
                <Cell>{name}</Cell><Cell>{city}</Cell><Cell>{i + 1}</Cell>
              </Row>
            ))}
          </Table>
          <Pager>
            <span>&lt;</span><b>1</b><span>2</span><span>3</span><span>4</span><span>5</span><Dots>...</Dots><span>4195</span><span>4196</span><span>&gt;</span>
          </Pager>
        </Panel>
        <Splitter><Grip><i /><i /><i /></Grip></Splitter>
        <View>
          <Toolbar>
            <ActionButton $w={166} $gap={12} $primary><PlayIcon />运行生成标签云</ActionButton>
            <ActionButton $w={117} $gap={13}><MinusLens />粗略显示</ActionButton>
            <ActionButton $w={117} $gap={12}><PlusLens />精细显示</ActionButton>
            <ActionButton $w={150} $gap={12}><RankIcon />显示排名信息</ActionButton>
            <ActionButton $w={191} $gap={13}><ClockIcon />显示通行时间(min)</ActionButton>
            <ActionButton $w={117} $gap={7}><SaveIcon />下载导出</ActionButton>
            <Count>当前展示的景点数量：7</Count>
          </Toolbar>
          <Canvas>
            {WORDS.map((w) => <Word key={w.t} $x={w.x} $y={w.y} $c={w.c} $center={w.center}>{w.t}</Word>)}
            <Legend>
              <LegendTitle>与中心的距离</LegendTitle>
              <Ramp>{RAMP.map((c) => <Swatch key={c} $c={c} />)}</Ramp>
              <RampLabel>4.35km</RampLabel>
            </Legend>
            <ViewTools>
              <ViewTool><LocateIcon /></ViewTool>
              <ViewTool><FitIcon /></ViewTool>
              <ViewTool $on><HandIcon /></ViewTool>
              <ViewTool><PlusIcon /></ViewTool>
              <ViewTool><LessIcon /></ViewTool>
            </ViewTools>
          </Canvas>
        </View>
      </Main>
      <Footer>
        <FooterText>
          <FooterLinks><span>首页</span><span>帮助</span><span>意见反馈</span><span>关于我们</span></FooterLinks>
          <Copyright>Copyright © 2024 地名标签云 hubutagcloud.cn All Rights Reserved. 备案号: 鄂ICP备2024043287号-1</Copyright>
        </FooterText>
        <Codes>
          <QrCode n={25} w={55} pad={6} seed={71} />
          <QrCode n={37} w={57} pad={4.5} seed={913} badge />
        </Codes>
      </Footer>
    </Page>
  );
}
